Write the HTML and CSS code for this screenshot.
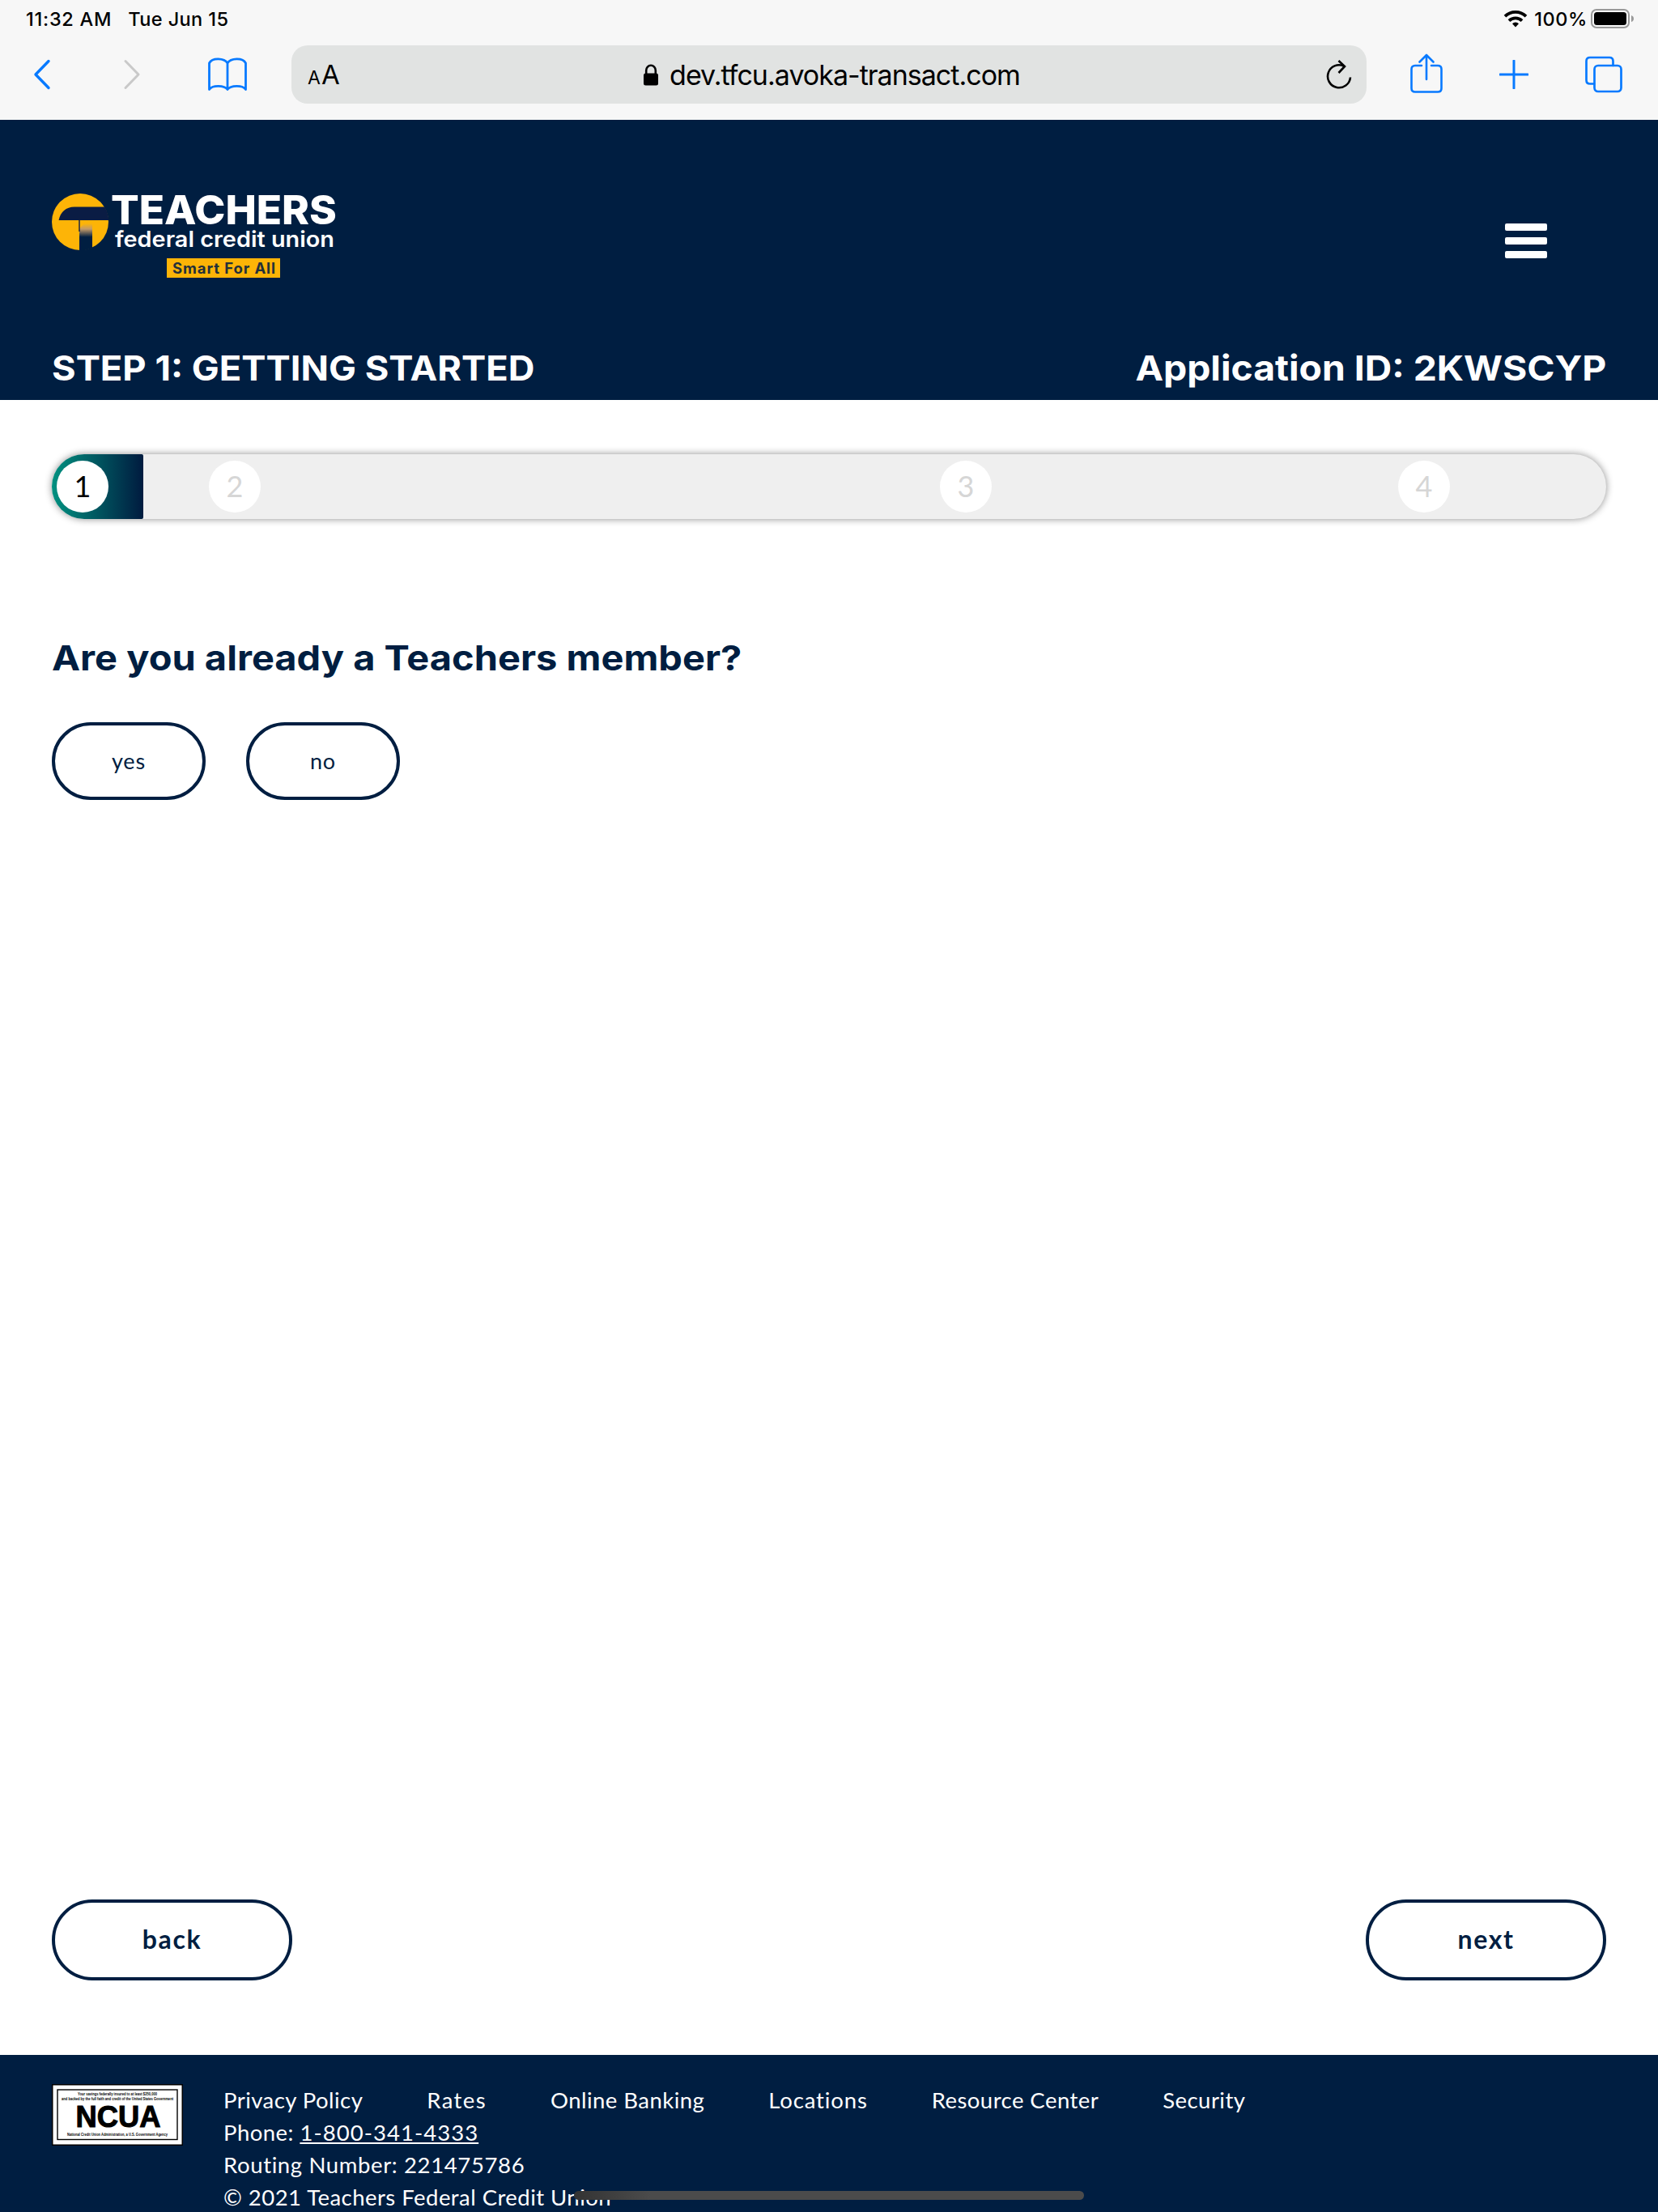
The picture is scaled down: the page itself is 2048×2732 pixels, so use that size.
FILE: index.html
```html
<!DOCTYPE html>
<html lang="en">
<head>
<meta charset="utf-8">
<title>Teachers Federal Credit Union</title>
<link rel="stylesheet" href="styles.css">
</head>
<body>
<div class="chrome">
  <div class="status">
    <span class="time">11:32 AM</span>
    <span class="date">Tue Jun 15</span>
    <svg class="wifi" width="30" height="22" viewBox="0 0 30 22"><g fill="none" stroke="#000" stroke-width="3.8"><path d="M2 8.2a18.6 18.6 0 0 1 26 0"/><path d="M7 13.6a11.5 11.5 0 0 1 16 0"/></g><path d="M11 17.2a5.8 5.8 0 0 1 8 0L15 21.4z"/></svg>
    <span class="percent">100%</span>
    <svg class="battery" width="54" height="24" viewBox="0 0 54 24"><rect x="1" y="1" width="46" height="22" rx="6" fill="none" stroke="#999" stroke-width="2"/><rect x="4" y="4" width="40" height="16" rx="3.5"/><path d="M50 8q3 1 3 4t-3 4z" fill="#999"/></svg>
  </div>
  <div class="toolbar">
    <svg class="ico back-ico" width="24" height="40" viewBox="0 0 24 40"><path d="M20 3.5 4 20l16 16.5" stroke-width="3.4"/></svg>
    <svg class="ico fwd-ico" width="24" height="40" viewBox="0 0 24 40"><path d="M4 3.5 20 20 4 36.5" stroke-width="3"/></svg>
    <svg class="ico book-ico" width="48" height="42" viewBox="0 0 48 42"><path d="M24 7C20 .5 5 0 1.5 7v32.500C5 34 20 34 24 39.500 28 34 43 34 46.500 39.500V7C43 0 28 .5 24 7zM24 7v32.500" stroke-width="2.8"/></svg>
    <div class="address">
      <span class="aa"><span class="aa-small">A</span><span class="aa-big">A</span></span>
      <span class="site"><svg width="18" height="27" viewBox="0 0 18 27"><rect y="11.5" width="18" height="15" rx="2.5"/><path d="M3.200 12V8a5.800 6.200 0 0 1 11.600 0v4" fill="none" stroke="#000" stroke-width="2.6"/></svg><span class="url">dev.tfcu.avoka-transact.com</span></span>
      <svg class="reload" width="32" height="38" viewBox="0 0 32 38"><path d="M30 22.500A14 14 0 1 1 22 8.600M15.500 2l7.500 7-7.500 8"/></svg>
    </div>
    <svg class="ico share-ico" width="40" height="50" viewBox="0 0 40 50"><path d="M14 15H6q-4.500 0-4.500 4.500V43q0 4.500 4.500 4.500h28q4.500 0 4.500-4.500V19.500Q38.500 15 34 15h-8M20 32V3M11.500 10.500 20 2l8.500 8.500" stroke-width="2.6"/></svg>
    <svg class="ico plus-ico" width="36" height="36" viewBox="0 0 36 36"><path d="M18 1v34M1 18h34" stroke-width="3"/></svg>
    <svg class="ico tabs-ico" width="46" height="46" viewBox="0 0 46 46"><path d="M11 34.500H6q-4.500 0-4.500-4.500V6.500Q1.500 2 6 2h24q4.500 0 4.500 4.500V12" stroke-width="2.7"/><rect x="11.5" y="12" width="33" height="32" rx="4.5" stroke-width="2.7"/></svg>
  </div>
</div>

<header class="header">
  <div class="brand-row">
    <svg class="logo" width="352" height="106" viewBox="0 0 352 106">
      <defs>
        <linearGradient id="stem" x1="0" y1="0" x2="0" y2="1"><stop offset=".08" stop-color="#fdb407"/><stop offset=".26" stop-color="#c39a68"/><stop offset=".52" stop-color="#001e41"/></linearGradient>
        <clipPath id="disc"><circle cx="35" cy="35" r="35.5"/></clipPath>
      </defs>
      <circle cx="35" cy="35" r="35" fill="#fdb407"/>
      <g clip-path="url(#disc)">
        <path d="M8.500 33Q12 17 28 16.500h44V33z" fill="#0a1c44"/>
        <path d="M34 72V45q4-10 16-11v38z" fill="url(#stem)"/>
        <path d="M33.300 33h1.400v14h-1.400z" fill="#0a1c44"/>
      </g>
      <g class="logo-text">
        <text x="73" y="38" font-size="49" font-weight="800" textLength="279" lengthAdjust="spacingAndGlyphs">TEACHERS</text>
        <text x="78" y="66" font-size="27" font-weight="600" textLength="271" lengthAdjust="spacingAndGlyphs">federal credit union</text>
      </g>
      <rect x="142" y="80" width="140" height="24" fill="#fdb407"/>
      <text class="tagline" x="149" y="98.5" font-size="18.5" font-weight="700" textLength="127">Smart For All</text>
    </svg>
    <svg class="menu" width="52" height="43" viewBox="0 0 52 43"><rect width="52" height="9" rx="2"/><rect y="17" width="52" height="9" rx="2"/><rect y="34" width="52" height="9" rx="2"/></svg>
  </div>
  <div class="title-row">
    <h1 class="heading step-title">STEP 1: GETTING STARTED</h1>
    <div class="heading app-id">Application ID: 2KWSCYP</div>
  </div>
</header>

<main class="main">
  <div class="progress">
    <div class="progress-fill"><span class="dot dot-active">1</span></div>
    <span class="dot dot-2">2</span>
    <span class="dot dot-3">3</span>
    <span class="dot dot-4">4</span>
  </div>
  <h2 class="heading question">Are you already a Teachers member?</h2>
  <div class="choices">
    <button class="pill choice">yes</button>
    <button class="pill choice">no</button>
  </div>
  <div class="nav">
    <button class="pill step-btn">back</button>
    <button class="pill step-btn">next</button>
  </div>
</main>

<footer class="footer">
  <svg class="ncua" width="162" height="76" viewBox="0 0 162 76">
    <rect x=".75" y=".75" width="160.5" height="74.5" fill="#fff" stroke="#000" stroke-width="1.5"/>
    <rect x="7" y="7" width="148" height="61.5" fill="none" stroke="#000" stroke-width="1.4"/>
    <g font-weight="700" text-anchor="middle">
      <text x="81" y="14" font-size="5.5" textLength="98" lengthAdjust="spacingAndGlyphs">Your savings federally insured to at least $250,000</text>
      <text x="81" y="20" font-size="5.5" textLength="138" lengthAdjust="spacingAndGlyphs">and backed by the full faith and credit of the United States Government</text>
      <text x="82" y="53" font-size="36" textLength="105" lengthAdjust="spacingAndGlyphs" stroke="#000">NCUA</text>
      <text x="81" y="64" font-size="5.5" textLength="124" lengthAdjust="spacingAndGlyphs">National Credit Union Administration, a U.S. Government Agency</text>
    </g>
  </svg>
  <div class="info">
    <nav class="links">
      <a>Privacy Policy</a><a class="rates">Rates</a><a>Online Banking</a><a class="locations">Locations</a><a>Resource Center</a><a>Security</a>
    </nav>
    <div>Phone: <a class="phone">1-800-341-4333</a></div>
    <div class="routing">Routing Number: 221475786</div>
    <div>© 2021 Teachers Federal Credit Union</div>
  </div>
</footer>
<div class="home-indicator"></div>
</body>
</html>
```

FILE: styles.css
```css
* { box-sizing: border-box; }
body { margin: 0; width: 2048px; height: 2732px; display: flex; flex-direction: column; overflow: hidden; position: relative; background: #fff; font-family: Lato, "Noto Sans", sans-serif; color: #001e41; }
svg { display: block; flex: none; }

/* Browser chrome */
.chrome { height: 148px; background: #f7f7f7; color: #000; font-family: Inter, sans-serif; }
.status { height: 46px; padding: 0 29px 0 32px; display: flex; align-items: center; font-size: 23.5px; font-weight: 500; white-space: nowrap; }
.time { letter-spacing: .75px; }
.date { margin-left: 20px; letter-spacing: .4px; }
.wifi { margin-left: auto; }
.percent { margin: 0 4px 0 8px; letter-spacing: .6px; }
.toolbar { height: 102px; padding: 10px 44px 20px 40px; display: flex; align-items: center; }
.ico { fill: none; stroke: #087aff; stroke-linecap: round; stroke-linejoin: round; }
.fwd-ico { stroke: #c9c9c9; margin-left: 87px; }
.book-ico { margin-left: 82px; }
.address { width: 1328px; height: 72px; margin-left: 55px; border-radius: 20px; background: #e1e3e2; display: flex; align-items: center; justify-content: space-between; padding: 0 18px 0 20px; flex: none; }
.aa { width: 66px; line-height: 72px; padding-top: 5px; }
.aa-small { font-size: 23px; }
.aa-big { font-size: 33px; margin-left: 1px; }
.site { display: flex; align-items: center; gap: 15px; font-size: 34px; margin-right: 29px; }
.url { letter-spacing: -.99px; margin-left: -1px; }
.reload { fill: none; stroke: #000; stroke-width: 2.6; }
.share-ico { margin: -3px 0 0 54px; }
.plus-ico { margin-left: 70px; }
.tabs-ico { margin-left: 70px; }

/* Page header */
.header { height: 346px; background: #001e41; color: #fff; padding: 91px 64px 14px; display: flex; flex-direction: column; justify-content: space-between; }
.brand-row { display: flex; justify-content: space-between; }
.logo-text { fill: #fff; font-family: Inter, sans-serif; }
.tagline { fill: #24303a; font-family: Inter, sans-serif; }
.menu { fill: #fff; margin: 37px 73px 0 0; }
.title-row { display: flex; justify-content: space-between; }
.heading { margin: 0; font: 700 43px/52px Inter, sans-serif; white-space: nowrap; transform-origin: left; }
.step-title { transform: scaleX(1.053); }
.app-id { transform: scaleX(1.077); transform-origin: right; }

/* Progress and form */
.main { height: 2044px; padding: 67px 64px 92px; display: flex; flex-direction: column; }
.progress { height: 80px; border-radius: 40px; background: #efefef; box-shadow: 0 0 10px rgba(0,0,0,.45); display: flex; align-items: center; flex: none; }
.progress-fill { width: 113px; height: 80px; padding-left: 6px; border-radius: 40px 2px 2px 40px; background: linear-gradient(90deg, #009180, #001e41 97%); display: flex; align-items: center; }
.dot { width: 64px; height: 64px; border-radius: 50%; background: #fff; color: #d6d6d6; font-size: 36px; line-height: 62px; text-align: center; }
.dot-active { color: #000; }
.dot-2 { margin-left: 81px; }
.dot-3 { margin-left: 839px; }
.dot-4 { margin-left: 502px; }
.question { margin-top: 145px; transform: scaleX(1.093); width: max-content; }
.choices { display: flex; gap: 50px; margin-top: 54px; }
.pill { border: 4px solid #001e41; border-radius: 50px; background: #fff; color: #001e41; font-family: inherit; padding: 0 0 2px; }
.choice { width: 190px; height: 96px; font-size: 27px; letter-spacing: .9px; }
.nav { display: flex; justify-content: space-between; margin-top: auto; }
.step-btn { width: 297px; height: 100px; font-size: 32px; font-weight: 700; letter-spacing: 1.6px; padding-bottom: 3px; }

/* Footer */
.footer { height: 194px; padding: 36px 64px 0; background: #001e41; color: #fff; display: flex; gap: 50px; overflow: hidden; }
.ncua { font-family: "Liberation Sans", sans-serif; }
.info { font-size: 27.5px; line-height: 40px; letter-spacing: .46px; white-space: nowrap; }
.links { display: flex; gap: 79px; }
.rates { letter-spacing: 1.4px; }
.locations { letter-spacing: .85px; }
.phone { text-decoration: underline; letter-spacing: 1.05px; }
.routing { letter-spacing: .63px; }
.home-indicator { position: absolute; left: 709px; top: 2706px; width: 630px; height: 11px; border-radius: 6px; background: linear-gradient(90deg, #333, #4b4b4b 15%); }
```
